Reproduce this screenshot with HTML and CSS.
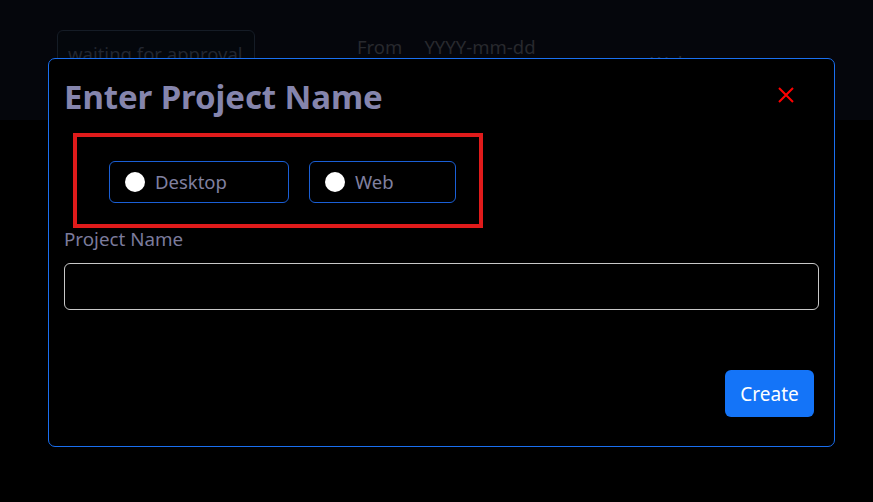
FILE: index.html
```html
<!DOCTYPE html>
<html>
<head>
<meta charset="utf-8">
<link rel="stylesheet" href="styles.css">
</head>
<body>
<div class="page">
  <header class="topbar">
    <span class="badge">waiting for approval</span>
    <span class="from">From</span>
    <span class="date">YYYY-mm-dd</span>
    <span class="web">Web</span>
  </header>
  <main class="rest"></main>
</div>
<div class="modal">
  <div class="modal-head">
    <h1 class="title">Enter Project Name</h1>
    <button class="close" aria-label="Close">
      <svg width="18" height="18" viewBox="0 0 18 18"><path d="M2 2L16 16M16 2L2 16" stroke="#ff0000" stroke-width="2" fill="none"/></svg>
    </button>
  </div>
  <div class="choice-box">
    <label class="choice wide"><span class="dot"></span><span class="choice-text">Desktop</span></label>
    <label class="choice"><span class="dot"></span><span class="choice-text">Web</span></label>
  </div>
  <div class="label">Project Name</div>
  <div class="input"></div>
  <div class="footer"><button class="create">Create</button></div>
</div>
</body>
</html>
```
FILE: styles.css
```css
* { box-sizing: border-box; }
html, body { margin: 0; padding: 0; background: #000; }
body { font-family: "Noto Sans", "Open Sans", sans-serif; width: 873px; height: 502px; overflow: hidden; position: relative; }
.page { display: flex; flex-direction: column; height: 502px; }
.topbar { height: 120px; background: #05060c; display: flex; align-items: flex-start; padding: 30px 0 0 57px; color: #28292e; font-size: 18.5px; }
.badge { border: 1px solid #151c26; border-radius: 6px; width: 198px; height: 50px; padding: 10px 0 0 10px; color: #222630; background: #04070c; }
.from { margin-left: 102px; margin-top: 4px; }
.date { margin-left: 22px; margin-top: 4px; }
.web { margin-left: 115px; margin-top: 20px; }
.rest { flex: 1; background: #000; }
.modal { position: absolute; left: 48px; top: 58px; width: 787px; height: 389px; border: 1px solid #1a6ff0; border-radius: 7px; background: #000; padding: 14px 15px 0 15px; display: flex; flex-direction: column; }
.modal-head { display: flex; justify-content: space-between; align-items: center; }
.title { margin: 0; font-size: 33px; font-weight: 700; color: #8585ad; line-height: 48px; letter-spacing: -0.1px; }
.close { background: none; border: none; padding: 0; margin-right: 24px; margin-top: -4px; display: flex; }
.choice-box { margin: 12px 0 0 9px; width: 410px; height: 95px; border: 4px solid #e01b1b; display: flex; align-items: center; gap: 20px; padding: 2px 0 0 32px; }
.choice { display: flex; align-items: center; height: 42px; border: 1px solid #1a5fd6; border-radius: 6px; padding: 0 0 0 15px; color: #8080a0; font-size: 18.5px; width: 147px; }
.choice.wide { width: 180px; }
.dot { width: 20px; height: 20px; border-radius: 50%; background: #fff; margin-right: 10px; }
.label { margin-top: -1px; font-size: 18.8px; color: #7b7b9c; line-height: 24px; }
.input { margin-top: 12px; height: 47px; border: 1px solid #c8c8c8; border-radius: 6px; width: 755px; }
.footer { display: flex; justify-content: flex-end; margin-top: 60px; padding-right: 5px; }
.create { background: #1474f8; color: #fff; border: none; border-radius: 6px; width: 89px; height: 47px; font-family: inherit; font-size: 19px; }
```
